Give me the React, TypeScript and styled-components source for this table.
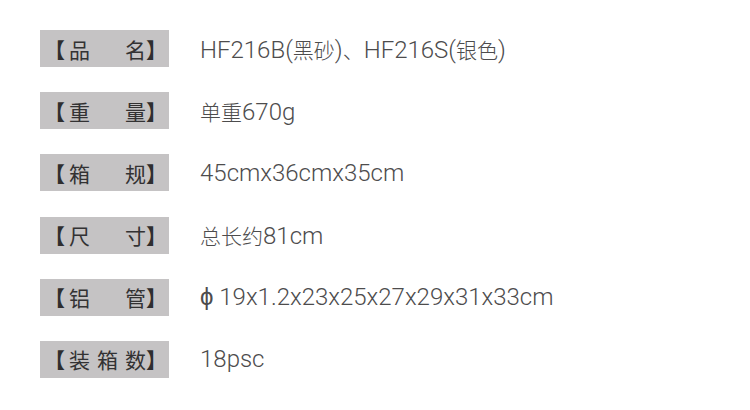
import React from "react"
import styled, { createGlobalStyle } from "styled-components"

interface Spec {
  label: string[]
  value: string
}

const specs: Spec[] = [
  { label: ["品", "名"], value: "HF216B(黑砂)、HF216S(银色)" },
  { label: ["重", "量"], value: "单重670g" },
  { label: ["箱", "规"], value: "45cmx36cmx35cm" },
  { label: ["尺", "寸"], value: "总长约81cm" },
  { label: ["铝", "管"], value: "ϕ 19x1.2x23x25x27x29x31x33cm" },
  { label: ["装", "箱", "数"], value: "18psc" },
]

// split a value into latin / chinese runs so the two can be sized apart
const splitRuns = (text: string) => text.match(/[\u3000-\u9fff]+|[^\u3000-\u9fff]+/g) ?? []
const isHan = (run: string) => /[\u3000-\u9fff]/.test(run)

const GlobalStyle = createGlobalStyle`
  html, body {
    margin: 0;
    padding: 0;
    background: #ffffff;
  }
`

const Sheet = styled.div`
  width: 750px;
  height: 410px;
  box-sizing: border-box;
  padding: 30px 0 0 40px;
  display: flex;
  flex-direction: column;
  gap: 25.2px;
  font-family: "Noto Sans CJK SC", "Noto Sans", sans-serif;
  background: #ffffff;
`

const Row = styled.div`
  display: flex;
  align-items: center;
  height: 37px;
`

const Label = styled.div`
  width: 129px;
  height: 37px;
  box-sizing: border-box;
  padding: 0 2px 0 4px;
  display: flex;
  align-items: center;
  background: #c5c3c4;
  color: #333233;
  font-size: 21px;
  font-weight: 400;
`

const Bracket = styled.span`
  flex: 0 0 auto;
  font-weight: 700;
  color: #2f2e2f;
`

const Chars = styled.span`
  flex: 1 1 auto;
  display: flex;
  justify-content: space-between;
  padding-left: 4px;
`

const Value = styled.div`
  margin-left: 31px;
  color: #4d4c4d;
  font-family: Roboto, "Noto Sans CJK SC", sans-serif;
  font-size: 24px;
  font-weight: 300;
  white-space: nowrap;
`

const Han = styled.span`
  font-family: "Noto Sans CJK SC", sans-serif;
  font-size: 21px;
  font-weight: 300;
`

const App: React.FC = () => {
  return (
    <>
      <GlobalStyle />
      <Sheet>
        {specs.map((s) => (
          <Row key={s.value}>
            <Label>
              <Bracket>【</Bracket>
              <Chars>
                {s.label.map((c) => (
                  <span key={c}>{c}</span>
                ))}
              </Chars>
              <Bracket>】</Bracket>
            </Label>
            <Value>
              {splitRuns(s.value).map((run, i) =>
                isHan(run) ? <Han key={i}>{run}</Han> : <span key={i}>{run}</span>
              )}
            </Value>
          </Row>
        ))}
      </Sheet>
    </>
  )
}

export default App
